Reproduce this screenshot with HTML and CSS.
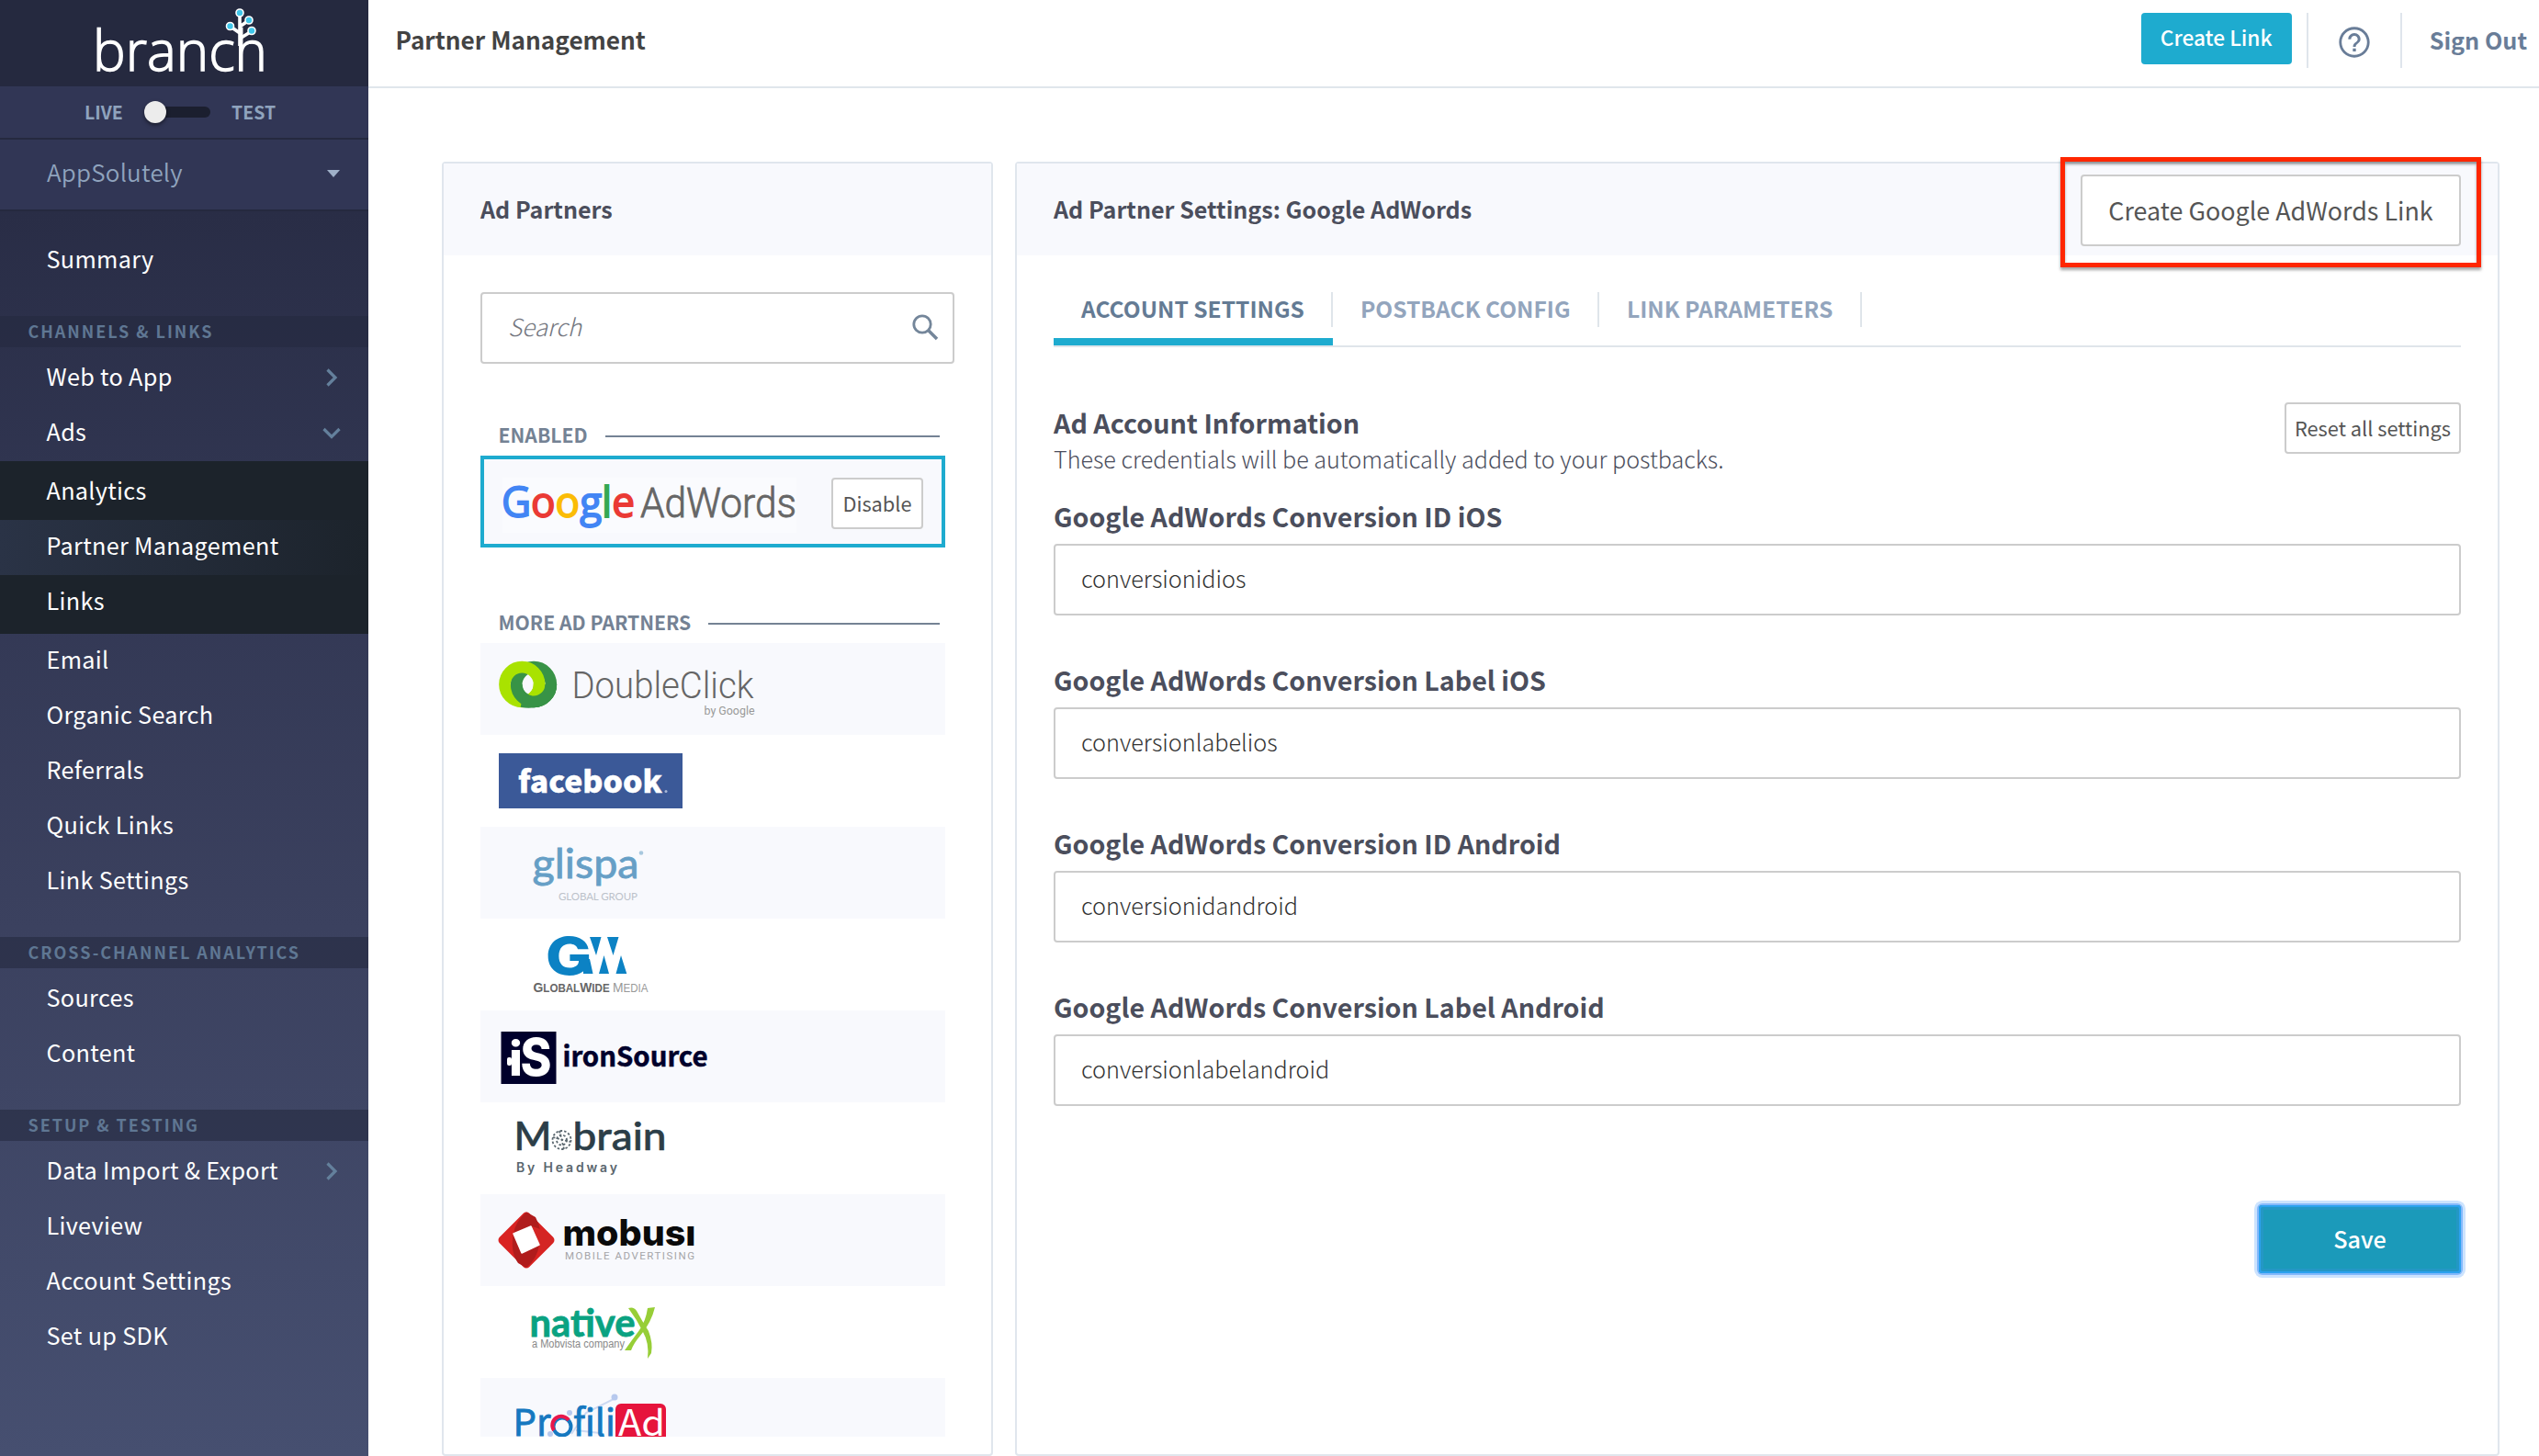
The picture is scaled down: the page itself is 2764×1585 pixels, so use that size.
FILE: index.html
```
<!DOCTYPE html>
<html lang="en">
<head>
<meta charset="utf-8">
<title>Partner Management</title>
<link rel="stylesheet" href="styles.css">
</head>
<body>
<div class="app">
  <aside class="sidebar">
    <div class="brand">
      <svg class="brand-logo" width="401" height="94" viewBox="0 0 401 94">
        <text x="101" y="77" font-family="Open Sans, sans-serif" font-size="61" font-weight="300" textLength="190" lengthAdjust="spacingAndGlyphs" fill="#fff" stroke="#fff" stroke-width="1.400">branch</text>
        <g stroke="#fff" stroke-width="3.6" fill="none"><path d="M261 14V50M261 29L271 22M261 36L250.500 28.500M261 42L274 34"/></g>
        <g fill="#3fc6ea" stroke="#fff" stroke-width="1.6"><circle cx="261" cy="14" r="4"/><circle cx="271" cy="22" r="4"/><circle cx="250.500" cy="28.500" r="4"/><circle cx="274" cy="33.500" r="4"/></g>
      </svg>
    </div>
    <div class="mode"><span>LIVE</span><span class="switch"><i class="knob"></i></span><span>TEST</span></div>
    <div class="app-select"><span>AppSolutely</span><i class="caret"></i></div>
    <nav class="menu">
      <a class="item summary">Summary</a>
      <h4 class="section">CHANNELS &amp; LINKS</h4>
      <a class="item">Web to App <svg class="chev" width="20" height="20" viewBox="0 0 20 20"><path d="M5.500 1.500L14 10L5.500 18.500"/></svg></a>
      <a class="item">Ads <svg class="chev" width="20" height="20" viewBox="0 0 20 20"><path d="M1.500 6L10 14.500L18.500 6"/></svg></a>
      <div class="submenu">
        <a class="item">Analytics</a>
        <a class="item active">Partner Management</a>
        <a class="item">Links</a>
      </div>
      <a class="item">Email</a>
      <a class="item">Organic Search</a>
      <a class="item">Referrals</a>
      <a class="item">Quick Links</a>
      <a class="item">Link Settings</a>
      <h4 class="section solid">CROSS-CHANNEL ANALYTICS</h4>
      <a class="item">Sources</a>
      <a class="item">Content</a>
      <h4 class="section solid">SETUP &amp; TESTING</h4>
      <a class="item">Data Import &amp; Export <svg class="chev" width="20" height="20" viewBox="0 0 20 20"><path d="M5.500 1.500L14 10L5.500 18.500"/></svg></a>
      <a class="item">Liveview</a>
      <a class="item">Account Settings</a>
      <a class="item">Set up SDK</a>
    </nav>
  </aside>

  <main class="main">
    <header class="topbar">
      <h1>Partner Management</h1>
      <div class="actions">
        <button class="create-link">Create Link</button>
        <div class="help"><svg width="40" height="40" viewBox="0 0 24 24"><path fill="#697d98" d="M11 18h2v-2h-2v2zm1-16C6.480 2 2 6.480 2 12s4.480 10 10 10 10-4.480 10-10S17.520 2 12 2zm0 18.300c-4.580 0-8.300-3.720-8.300-8.300s3.720-8.300 8.300-8.300 8.300 3.720 8.300 8.300-3.720 8.300-8.300 8.300zM12 6c-2.210 0-4 1.790-4 4h1.800c0-1.200 1-2.200 2.200-2.200s2.200 1 2.200 2.200c0 2-3.100 1.900-3.100 5h1.800c0-2.250 3.100-2.500 3.100-5 0-2.210-1.790-4-4-4z"/></svg></div>
        <a class="sign-out">Sign Out</a>
      </div>
    </header>

    <div class="panels">
      <section class="panel partners">
        <div class="panel-head"><h2>Ad Partners</h2></div>
        <div class="partners-body">
          <div class="search">
            <span>Search</span>
            <svg width="30" height="30" viewBox="0 0 30 30" fill="none" stroke="#74869a"><circle cx="12" cy="12" r="9.200" stroke-width="2.800"/><path d="M18.500 18.500L28 28" stroke-width="3.600"/></svg>
          </div>
          <div class="group"><span>ENABLED</span><i></i></div>
          <div class="selected">
            <svg width="376" height="92" viewBox="0 0 376 92">
              <rect x="20" y="20" width="320" height="60" fill="#fafbfe"/>
              <text y="63" font-family="Open Sans, sans-serif" font-size="46" x="19" textLength="145" lengthAdjust="spacingAndGlyphs" stroke-width="1.800"><tspan fill="#4285f4" stroke="#4285f4">G</tspan><tspan fill="#ea3a35" stroke="#ea3a35">o</tspan><tspan fill="#fbbc05" stroke="#fbbc05">o</tspan><tspan fill="#4285f4" stroke="#4285f4">g</tspan><tspan fill="#34a853" stroke="#34a853">l</tspan><tspan fill="#ea3a35" stroke="#ea3a35">e</tspan></text>
              <text x="170" y="63" font-family="Roboto, sans-serif" font-size="44" font-weight="300" textLength="170" lengthAdjust="spacingAndGlyphs" fill="#666" stroke="#666" stroke-width=".8">AdWords</text>
            </svg>
            <button class="small-btn disable">Disable</button>
          </div>
          <div class="group more"><span>MORE AD PARTNERS</span><i></i></div>
          <div class="rows">
            <div class="row"><svg width="506" height="100" viewBox="0 0 506 100">
              <g fill="none" stroke-width="12.700">
                <circle cx="58" cy="45" r="18.800" stroke="#389346"/>
                <circle cx="45.300" cy="45" r="18.800" stroke="#a9e200"/>
                <path d="M39.200 45A18.800 18.800 0 0 0 58 63.800A18.800 18.800 0 0 0 76.800 45" stroke="#389346"/>
                <path d="M64.100 44A18.800 18.800 0 0 1 57.500 59.300" stroke="#a9e200"/>
                <path d="M45 63.500Q52 65 58 63.800A18.800 18.800 0 0 0 76.800 45" stroke="#389346"/>
              </g>
              <text x="99.500" y="59.500" font-family="Roboto, sans-serif" font-size="40" font-weight="300" textLength="198" lengthAdjust="spacingAndGlyphs" fill="#666">DoubleClick</text>
              <text x="243.500" y="77.500" font-family="Roboto, sans-serif" font-size="12.600" textLength="55" lengthAdjust="spacingAndGlyphs" fill="#999">by Google</text>
            </svg></div>
            <div class="row"><svg width="506" height="100" viewBox="0 0 506 100">
              <rect x="20" y="20" width="200" height="60" fill="#3b5998"/>
              <text x="41" y="63" font-family="Noto Sans CJK SC, sans-serif" font-size="33" font-weight="900" textLength="157" lengthAdjust="spacingAndGlyphs" fill="#fff" stroke="#fff" stroke-width=".4">facebook</text>
              <circle cx="202" cy="61.500" r="1.500" fill="#a9b8d6"/>
            </svg></div>
            <div class="row"><svg width="506" height="100" viewBox="0 0 506 100">
              <text x="56.500" y="56" font-family="Lato, sans-serif" font-size="44" textLength="116" lengthAdjust="spacingAndGlyphs" fill="#669fc6" stroke="#669fc6" stroke-width=".8">glispa</text>
              <circle cx="175" cy="28.500" r="2.300" fill="#a8c8de"/>
              <text x="85" y="79.500" font-family="Lato, sans-serif" font-size="11.500" textLength="86" fill="#bcc2ca">GLOBAL GROUP</text>
            </svg></div>
            <div class="row"><svg width="506" height="100" viewBox="0 0 506 100">
              <text x="71" y="61" font-family="Inter, sans-serif" font-size="56" font-weight="800" textLength="50" lengthAdjust="spacingAndGlyphs" fill="#0c82c4">G</text>
              <path fill="#0c82c4" d="M119 20H131.500L126 40ZM138 20H150.500L144.500 40ZM134.500 40L140 60H129ZM153 40L159.300 60H147.500ZM112 44H119L122.500 60H112Z"/>
              <text y="80" x="57.500" font-family="Liberation Sans, sans-serif" font-size="12.500" textLength="125" lengthAdjust="spacingAndGlyphs" fill="#666"><tspan font-size="15" font-weight="700">G</tspan><tspan font-weight="700">LOBAL</tspan><tspan font-size="15" font-weight="700">W</tspan><tspan font-weight="700">IDE</tspan> <tspan font-size="15" fill="#999">M</tspan><tspan fill="#999">EDIA</tspan></text>
            </svg></div>
            <div class="row"><svg width="506" height="100" viewBox="0 0 506 100">
              <rect x="22.500" y="23" width="60" height="57" fill="#00002b"/>
              <text x="31" y="71" font-family="Inter, sans-serif" font-size="52" font-weight="800" textLength="15" lengthAdjust="spacingAndGlyphs" fill="#fff">i</text>
              <rect x="29" y="51" width="5" height="9" rx="2" fill="#fff"/>
              <text x="43.500" y="71" font-family="Inter, sans-serif" font-size="57" font-weight="800" textLength="34" lengthAdjust="spacingAndGlyphs" fill="#fff">S</text>
              <text x="89.500" y="60.500" font-family="Noto Sans CJK SC, sans-serif" font-size="29.500" font-weight="700" textLength="158" lengthAdjust="spacingAndGlyphs" fill="#00002b" stroke="#00002b" stroke-width=".5">ironSource</text>
            </svg></div>
            <div class="row"><svg width="506" height="100" viewBox="0 0 506 100">
              <g font-family="Lato, sans-serif" font-size="42" fill="#2c3e48" stroke="#2c3e48" stroke-width=".6">
                <text x="36.500" y="52" font-weight="500" textLength="41" lengthAdjust="spacingAndGlyphs">M</text>
                <text x="100.500" y="52" font-weight="500" textLength="102" lengthAdjust="spacingAndGlyphs">brain</text>
              </g>
              <g fill="none" stroke="#5a666e" stroke-width="1.800" stroke-dasharray="2.500 2"><circle cx="88.500" cy="41" r="10"/><circle cx="88.500" cy="41" r="5.500"/><path d="M79 38L98 43M86 31L91 51"/></g>
              <text x="39" y="75.500" font-family="Inter, sans-serif" font-size="14" font-weight="600" textLength="110" fill="#5a666e">By Headway</text>
            </svg></div>
            <div class="row"><svg width="506" height="100" viewBox="0 0 506 100">
              <path d="M50 24L76 50L50 76L24 50Z" fill="#d92322" stroke="#d92322" stroke-width="9" stroke-linejoin="round"/>
              <path d="M50 19.500L60 25Q68 40 65 55L56 35L36 43Q38 30 50 19.500Z" fill="#b01c1c"/>
              <path d="M80 50L74 58Q60 66 45 64L64 55L56 35Q70 38 80 50Z" fill="#d42524"/>
              <path d="M50 80L41 75Q32 62 36 43L45 64L64 55Q62 70 50 80Z" fill="#b01c1c"/>
              <path d="M36 43L55 35L64 55L45 64Z" fill="#fff" stroke="#fff" stroke-width="1.500" stroke-linejoin="round"/>
              <text x="89.500" y="56" font-family="Inter, sans-serif" font-size="39" font-weight="800" textLength="145" lengthAdjust="spacingAndGlyphs" fill="#0a0a0a">mobusı</text>
              <text x="92" y="71" font-family="Roboto, sans-serif" font-size="11.500" textLength="141" fill="#a5a5a8">MOBILE ADVERTISING</text>
            </svg></div>
            <div class="row"><svg width="506" height="100" viewBox="0 0 506 100">
              <text x="53.500" y="55" font-family="Lato, sans-serif" font-size="42" font-weight="700" textLength="115" lengthAdjust="spacingAndGlyphs" fill="#0aa281" stroke="#0aa281" stroke-width=".8">native</text>
              <text x="56" y="67" font-family="Liberation Sans, sans-serif" font-size="12" textLength="101" lengthAdjust="spacingAndGlyphs" fill="#888">a Mobvista company</text>
              <path d="M161 24Q167 22 170 27Q176 38 183 49Q188 62 186 73L182 79Q184 62 177 50Q170 36 161 24ZM182 24L190 23Q186 40 174 54Q167 62 164 70H157Q164 60 173 48Q180 38 182 24Z" fill="#97ce37"/>
            </svg></div>
            <div class="row cut"><svg width="506" height="100" viewBox="0 0 506 100">
              <path d="M99 61L115 38L147 22M104 57L130 60" stroke="#ccd9f2" stroke-width="2" fill="none"/>
              <g fill="#b7c9ee"><circle cx="146" cy="21" r="3.500"/><circle cx="97" cy="38" r="3"/><circle cx="76" cy="61" r="3"/></g>
              <g font-family="Noto Sans CJK SC, sans-serif" font-size="40" font-weight="400" fill="#1678c0" stroke="#1678c0" stroke-width=".8">
                <text x="35.500" y="63" textLength="41" lengthAdjust="spacingAndGlyphs">Pr</text>
                <text x="101" y="63" textLength="46" lengthAdjust="spacingAndGlyphs">fili</text>
              </g>
              <circle cx="89" cy="53" r="9.500" fill="none" stroke="#1678c0" stroke-width="4"/>
              <path d="M80 57A9.500 9.500 0 0 1 96 46" fill="none" stroke="#e8174b" stroke-width="4"/>
              <rect x="147" y="28" width="55" height="50" rx="6" fill="#e6143c"/>
              <text x="150" y="63" font-family="Noto Sans CJK SC, sans-serif" font-size="39" textLength="51" lengthAdjust="spacingAndGlyphs" fill="#fff">Ad</text>
            </svg></div>
          </div>
        </div>
      </section>

      <section class="panel settings">
        <div class="panel-head">
          <h2>Ad Partner Settings: Google AdWords</h2>
          <div class="highlighted"><button class="big-btn">Create Google AdWords Link</button><i class="callout"></i></div>
        </div>
        <div class="settings-body">
          <div class="tabs">
            <a class="tab on t1"><span>ACCOUNT SETTINGS</span></a>
            <a class="tab t2"><span>POSTBACK CONFIG</span></a>
            <a class="tab t3"><span>LINK PARAMETERS</span></a>
          </div>
          <div class="info">
            <div><h3>Ad Account Information</h3><p>These credentials will be automatically added to your postbacks.</p></div>
            <button class="small-btn reset">Reset all settings</button>
          </div>
          <div class="fields">
            <label>Google AdWords Conversion ID iOS<input value="conversionidios"></label>
            <label>Google AdWords Conversion Label iOS<input value="conversionlabelios"></label>
            <label>Google AdWords Conversion ID Android<input value="conversionidandroid"></label>
            <label>Google AdWords Conversion Label Android<input value="conversionlabelandroid"></label>
          </div>
          <div class="footer"><button class="save">Save</button></div>
        </div>
      </section>
    </div>
  </main>
</div>
</body>
</html>
```
FILE: styles.css
```
* { box-sizing: border-box; }
html, body { margin: 0; height: 1585px; overflow: hidden; }
body { font-family: "Noto Sans CJK SC", sans-serif; background: #fff; color: #4b4e5c; }
h1, h2, h3, h4, p { margin: 0; }
button, input { font-family: inherit; margin: 0; padding: 0; white-space: nowrap; }
svg { display: block; flex: none; }

.app { display: flex; height: 1585px; }

/* Sidebar */
.sidebar { width: 401px; flex: none; background: linear-gradient(#25293f 0, #292d46 230px, #313652 560px, #3b415f 1010px, #464f70 1585px); color: #fff; }
.brand { height: 94px; background: #25293f; overflow: hidden; }
.mode { height: 58px; background: #313655; border-bottom: 2px solid #25293f; display: flex; padding: 0 0 0 92px; color: #8fa3bd; font-size: 19.500px; font-weight: 700; line-height: 55px; }
.switch { position: relative; width: 72px; height: 12px; margin: 22px 23px 0 24px; border-radius: 6px; background: #1b1f2f; flex: none; }
.mode span:first-child { width: 41px; }
.knob { position: absolute; left: 0; top: -6px; width: 24px; height: 24px; border-radius: 50%; background: #ececec; box-shadow: 0 2px 4px rgba(0,0,0,.5); }
.app-select { height: 78px; background: #313655; border-bottom: 2px solid #25293f; display: flex; justify-content: space-between; padding: 0 31px 0 51px; color: #8fa3bd; font-size: 26px; font-weight: 350; letter-spacing: .2px; line-height: 70px; }
.caret { width: 0; height: 0; margin-top: 33px; border: 7.500px solid transparent; border-top: 8px solid #9fb0c8; border-bottom: 0; }
.menu { display: flex; flex-direction: column; }
.item { display: flex; justify-content: space-between; height: 60px; padding: 0 30px 0 50.500px; font-size: 25.200px; letter-spacing: .33px; line-height: 54px; flex: none; }
.summary { margin-top: 24px; }
.chev { margin-top: 19px; fill: none; stroke: #64809c; stroke-width: 3.200; }
.section { height: 34px; margin: 30px 0 4px; padding-left: 30.500px; background: rgba(37,41,63,.6); color: #5f7793; font-size: 18px; font-weight: 700; letter-spacing: 1.950px; line-height: 33px; flex: none; }
.submenu { background: #1c232b; padding: 4px 0; }
.active { background: linear-gradient(90deg, #2a3346, #1c232b); }

/* Top bar */
.main { flex: 1; min-width: 0; }
.topbar { height: 96px; border-bottom: 2px solid #e0e6ec; display: flex; justify-content: space-between; padding: 0 13px 0 29.500px; }
.topbar h1 { color: #434343; font-size: 26.200px; font-weight: 700; line-height: 86px; }
.actions { display: flex; padding-top: 14px; }
.create-link { width: 164px; height: 56px; padding-bottom: 2px; border: 0; border-radius: 4px; background: #1eabcf; color: #fff; font-size: 22.700px; font-weight: 500; line-height: 52px; }
.help { height: 60px; width: 104px; margin-left: 16px; padding: 12px 0 0 30px; border: solid #dfe5ec; border-width: 0 2px; }
.sign-out { margin-left: 30px; color: #697d98; font-size: 25.200px; font-weight: 700; line-height: 58px; }

/* Panels */
.panels { display: flex; gap: 24px; padding: 80px 0 0 80px; }
.panel { height: 1409px; border: 2px solid #e0e6ed; border-radius: 4px; flex: none; }
.partners { width: 600px; }
.settings { width: 1616px; }
.panel-head { height: 100px; padding: 0 40px; background: #f8f9fd; display: flex; justify-content: space-between; }
.panel-head h2 { color: #4b4e5c; font-size: 25.080px; font-weight: 700; line-height: 98px; }
.partners-body { padding: 40px 0 0 40px; }
.search { width: 516px; height: 78px; margin-bottom: 58px; padding: 0 15px 0 28px; border: 2px solid #ccc; border-radius: 4px; display: flex; justify-content: space-between; color: #74777f; font-size: 26px; font-weight: 300; font-style: italic; line-height: 69px; }
.search svg { margin-top: 21px; }
.group { display: flex; align-items: center; width: 500px; height: 42px; padding-left: 19.500px; color: #748294; font-size: 21.150px; font-weight: 700; line-height: 42px; }
.group span { margin-top: -4px; }
.group i { flex: 1; height: 2px; margin-left: 19px; background: #748294; }
.more { margin-top: 62px; }
.selected { display: flex; width: 506px; height: 100px; border: 4px solid #1eabcf; background: #f8f9fd; }
.small-btn, .big-btn { border: 2px solid #ccc; border-radius: 4px; background: #fff; color: #555; white-space: nowrap; }
.small-btn { height: 56px; font-size: 21.800px; padding-bottom: 2px; line-height: 49px; }
.disable { width: 100px; margin: 20px 0 0 2px; }
.rows { width: 506px; height: 864px; overflow: hidden; }
.row { height: 100px; overflow: hidden; }
.row:nth-child(odd) { background: #f8f9fd; }
.cut { height: 64px; }

.highlighted { position: relative; margin-top: 12px; }
.big-btn { width: 414px; height: 78px; padding-bottom: 1px; font-size: 26.880px; line-height: 70px; }
.callout { position: absolute; left: -22px; top: -19px; width: 458px; height: 120px; border: 5px solid #ff2600; box-shadow: 0 3px 3px rgba(0,0,0,.35), inset 0 3px 3px rgba(0,0,0,.35); pointer-events: none; }

.settings-body { padding: 40px 40px 0; }
.tabs { display: flex; height: 60px; border-bottom: 2px solid #dfe5ea; }
.tab { height: 58px; border-bottom: 8px solid transparent; color: #93a5bd; font-size: 24.550px; font-weight: 700; }
.tab span { display: block; height: 38px; padding-left: 30px; border-right: 2px solid #dfe5ea; line-height: 35px; white-space: nowrap; }
.t1 { width: 304px; }
.t2 { width: 290px; }
.t3 { width: 286px; }
.on { border-color: #1eabcf; color: #647b94; }
.on span { border-color: #dfe5ea; }
.info { display: flex; justify-content: space-between; height: 140px; padding-top: 60px; }
.info h3 { margin-top: 2px; color: #4b4e5c; font-size: 28.680px; font-weight: 700; line-height: 40px; }
.info p { color: #4b4e5c; font-size: 25.130px; font-weight: 300; line-height: 38px; }
.reset { width: 192px; }
.fields { display: flex; flex-direction: column; gap: 50px; padding-top: 24px; }
.fields label { display: block; color: #4b4e5c; font-size: 28.620px; font-weight: 700; line-height: 40px; }
.fields input { display: block; width: 100%; height: 78px; margin-top: 10px; padding: 0 28px 4px; border: 2px solid #ccc; border-radius: 4px; background: #fff; color: #333; font-size: 25.230px; font-weight: 300; }
.footer { display: flex; justify-content: flex-end; padding-top: 108px; }
.save { width: 220px; height: 74px; padding: 0 0 3px; border: 0; border-radius: 4px; background: #1b9aba; color: #fff; font-size: 25.200px; font-weight: 500; line-height: 68px; box-shadow: 0 0 0 2px #85b9fb, 0 0 0 5px #cce3fe, inset 0 0 0 2px #2ba2ef, inset 0 0 0 5px #2497c5; }
```
